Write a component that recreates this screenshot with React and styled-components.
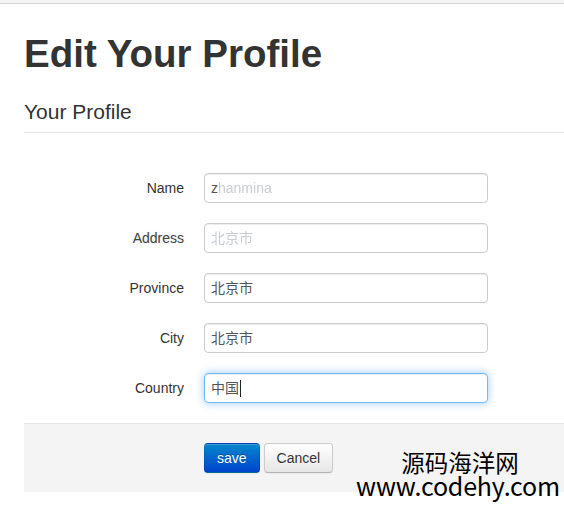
import React from "react";
import styled, { createGlobalStyle } from "styled-components";

const Global = createGlobalStyle`
  html, body { margin: 0; padding: 0; background: #fff; overflow: hidden; }
  body {
    font-family: "Liberation Sans", Arial, "Noto Sans CJK SC", sans-serif;
    font-size: 14px;
    line-height: 20px;
    color: #333;
  }
  * { box-sizing: border-box; }
`;

const Page = styled.div`
  position: relative;
  width: 564px;
  height: 508px;
  overflow: hidden;
`;

const TopBar = styled.div`
  height: 4px;
  background: #f4f4f4;
  border-bottom: 1px solid #d6d6d6;
`;

const Container = styled.div`
  width: 940px;
  margin-left: 24px;
`;

const Title = styled.h1`
  margin: 30px 0 18px;
  font-size: 38.5px;
  line-height: 40px;
  font-weight: bold;
  color: #333;
`;

const Legend = styled.div`
  font-size: 21px;
  line-height: 40px;
  color: #333;
  border-bottom: 1px solid #e5e5e5;
  margin-bottom: 40px;
`;

const Group = styled.div`
  display: flex;
  align-items: flex-start;
  margin-bottom: 20px;
`;

const Label = styled.label`
  width: 160px;
  padding-top: 5px;
  text-align: right;
  line-height: 20px;
  color: #333;
  margin-right: 20px;
  ${(p) => p.$smudge && `text-shadow: 0 0 3px rgba(0,0,0,0.12); color: #444;`}
`;

const Box = styled.div`
  width: 284px;
  height: 30px;
  padding: 4px 6px;
  border: 1px solid ${(p) => (p.$focus ? "rgba(82,168,236,0.8)" : "#ccc")};
  border-radius: 4px;
  box-shadow: inset 0 1px 1px rgba(0,0,0,0.075)
    ${(p) => (p.$focus ? ", 0 0 8px rgba(82,168,236,0.6)" : "")};
  font-size: 14px;
  line-height: 20px;
  color: #555;
  font-family: "Liberation Sans", Arial, "Noto Sans CJK SC", sans-serif;
  white-space: nowrap;
  display: flex;
  align-items: center;
`;

const Faint = styled.span`
  color: #c9cdd4;
  filter: blur(0.6px);
`;

const Caret = styled.span`
  display: inline-block;
  width: 1px;
  height: 17px;
  background: #222;
  margin-left: 1px;
`;

const Actions = styled.div`
  padding: 19px 20px 19px 180px;
  background: #f4f4f4;
  border-top: 1px solid #e5e5e5;
  display: flex;
  gap: 4px;
`;

const Button = styled.button`
  height: 30px;
  padding: 4px 12px;
  font-size: 14px;
  line-height: 20px;
  font-family: "Liberation Sans", Arial, sans-serif;
  border-radius: 4px;
  cursor: pointer;
  color: ${(p) => (p.$primary ? "#fff" : "#333")};
  background: ${(p) =>
    p.$primary
      ? "linear-gradient(to bottom, #0088cc, #0044cc)"
      : "linear-gradient(to bottom, #ffffff, #e6e6e6)"};
  border: 1px solid ${(p) => (p.$primary ? "rgba(0,0,0,0.1)" : "#ccc")};
  border-bottom-color: ${(p) => (p.$primary ? "rgba(0,0,0,0.25)" : "#b3b3b3")};
  text-shadow: ${(p) =>
    p.$primary ? "0 -1px 0 rgba(0,0,0,0.25)" : "0 1px 1px rgba(255,255,255,0.75)"};
  box-shadow: inset 0 1px 0 rgba(255,255,255,0.2), 0 1px 2px rgba(0,0,0,0.05);
`;

const Watermark = styled.div`
  position: absolute;
  right: 4px;
  bottom: 10px;
  width: 204px;
  display: flex;
  flex-direction: column;
  align-items: center;
  font-family: "Noto Sans CJK SC", "DejaVu Sans", sans-serif;
  color: #000;
`;

const WmCn = styled.div`
  font-size: 23.5px;
  line-height: 21px;
  padding-left: 4px;
`;

const WmUrl = styled.div`
  font-size: 25px;
  line-height: 25px;
  letter-spacing: -0.2px;
`;

const rows = [
  { label: "Name", content: <><span>z</span><Faint>hanmina</Faint></> },
  { label: "Address", smudge: true, content: <Faint>北京市</Faint> },
  { label: "Province", content: "北京市" },
  { label: "City", content: "北京市" },
  { label: "Country", focus: true, content: <>中国<Caret /></> },
];

export default function App() {
  return (
    <Page>
      <Global />
      <TopBar />
      <Container>
        <Title>Edit Your Profile</Title>
        <Legend>Your Profile</Legend>
        {rows.map((r) => (
          <Group key={r.label}>
            <Label $smudge={r.smudge}>{r.label}</Label>
            <Box $focus={r.focus} role="textbox">{r.content}</Box>
          </Group>
        ))}
        <Actions>
          <Button $primary>save</Button>
          <Button>Cancel</Button>
        </Actions>
      </Container>
      <Watermark>
        <WmCn>源码海洋网</WmCn>
        <WmUrl>www.codehy.com</WmUrl>
      </Watermark>
    </Page>
  );
}
